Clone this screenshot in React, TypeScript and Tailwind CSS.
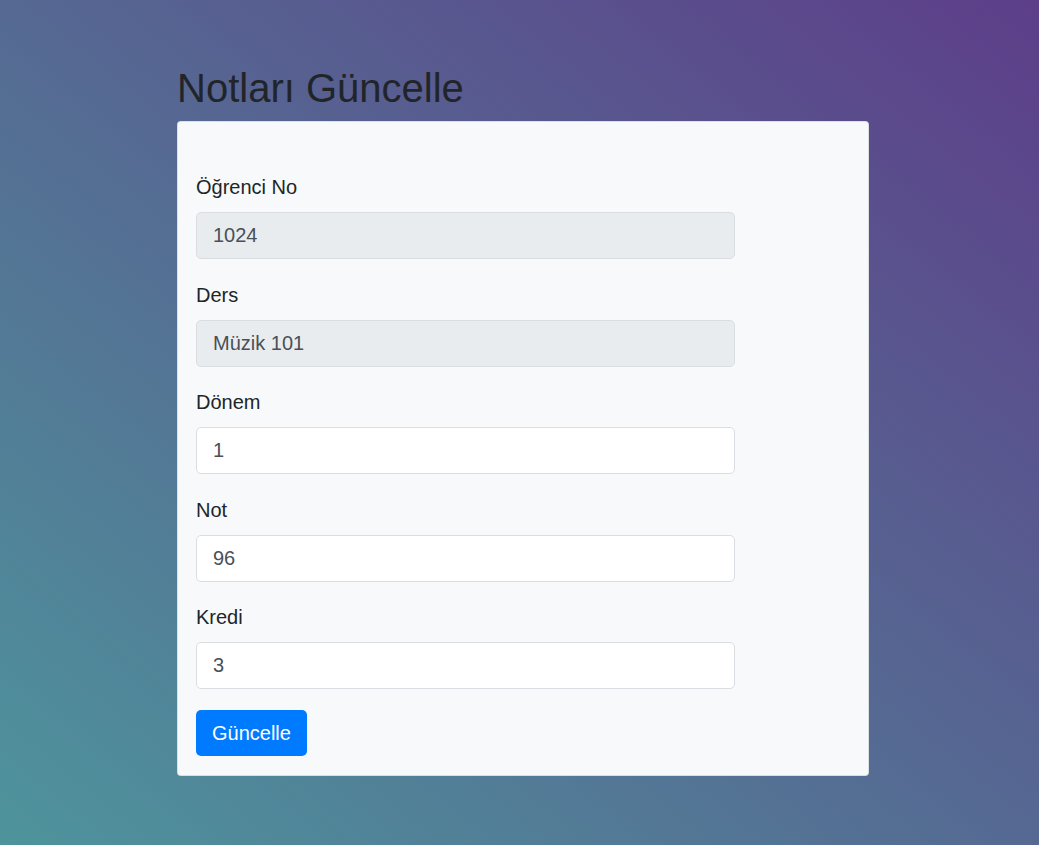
const fields = [
  { label: "Öğrenci No", value: "1024", disabled: true },
  { label: "Ders", value: "Müzik 101", disabled: true },
  { label: "Dönem", value: "1", disabled: false },
  { label: "Not", value: "96", disabled: false },
  { label: "Kredi", value: "3", disabled: false },
];

export default function App() {
  return (
    <div
      className="min-h-screen bg-[linear-gradient(to_top_right,#4e949c,#5d3e89)] pt-[64px]"
      style={{ fontFamily: '"Liberation Sans", Arial, sans-serif' }}
    >
      <div className="ml-[177px] w-[692px]">
        <h1 className="mb-[9px] text-[40px] leading-[48px] text-[#212529]">
          Notları Güncelle
        </h1>

        <div className="rounded-[4px] border border-black/10 bg-[#f8f9fa] pt-[50px] pb-[19px] pl-[18px]">
          <form className="flex flex-col gap-[20.5px]">
            {fields.map((f) => (
              <div key={f.label}>
                <label className="mb-[10px] block text-[20px] leading-[30px] text-[#212529]">
                  {f.label}
                </label>
                <input
                  defaultValue={f.value}
                  disabled={f.disabled}
                  className={
                    "block h-[47px] w-[539px] rounded-[5px] border border-[#dadee2] px-[16px] text-[20px] text-[#495057] outline-none " +
                    (f.disabled ? "bg-[#e9ecef]" : "bg-white")
                  }
                />
              </div>
            ))}

            <div>
              <button
                type="button"
                className="h-[46px] rounded-[5px] bg-[#007bff] px-[16px] text-[20px] text-white"
              >
                Güncelle
              </button>
            </div>
          </form>
        </div>
      </div>
    </div>
  );
}
